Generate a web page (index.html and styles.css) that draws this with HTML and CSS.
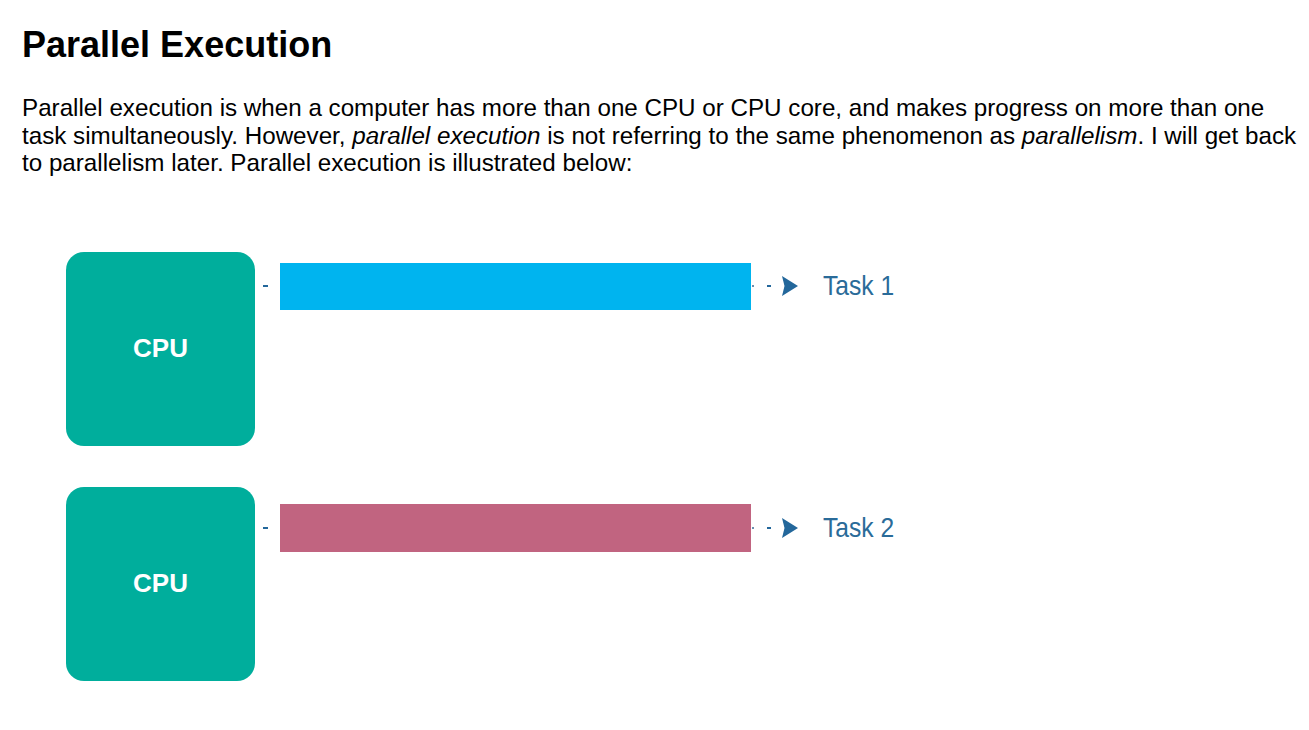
FILE: index.html
```html
<!DOCTYPE html>
<html lang="en">
<head>
<meta charset="utf-8">
<title>Parallel Execution</title>
<link rel="stylesheet" href="styles.css">
</head>
<body>
<main class="page">
  <h1 class="title">Parallel Execution</h1>
  <p class="text">Parallel execution is when a computer has more than one CPU or CPU core, and makes progress on more than one<br>task simultaneously. However, <em>parallel execution</em> is not referring to the same phenomenon as <em>parallelism</em>. I will get back<br>to parallelism later. Parallel execution is illustrated below:</p>
  <div class="diagram">
    <div class="row row-1">
      <div class="cpu">CPU</div>
      <div class="lane">
        <span class="dash dash-in"></span>
        <div class="bar bar-blue"></div>
        <span class="dot"></span>
        <span class="dash dash-out"></span>
        <svg class="arrow" width="16" height="20" viewBox="0 0 16 20"><polygon points="0,0 16,10 0,20 2.5,10" fill="#23679b"/></svg>
        <span class="task">Task 1</span>
      </div>
    </div>
    <div class="row row-2">
      <div class="cpu">CPU</div>
      <div class="lane">
        <span class="dash dash-in"></span>
        <div class="bar bar-pink"></div>
        <span class="dot"></span>
        <span class="dash dash-out"></span>
        <svg class="arrow" width="16" height="20" viewBox="0 0 16 20"><polygon points="0,0 16,10 0,20 2.5,10" fill="#23679b"/></svg>
        <span class="task">Task 2</span>
      </div>
    </div>
  </div>
</main>
</body>
</html>
```

FILE: styles.css
```css
html, body {
  margin: 0;
  padding: 0;
  background: #ffffff;
}

.page {
  padding: 24px 0 0 22px;
  font-family: "Liberation Sans", Arial, sans-serif;
  color: #000000;
}

.title {
  margin: 0;
  font-size: 36px;
  font-weight: bold;
  line-height: 41px;
}

.text {
  margin: 29px 0 0 0;
  font-size: 24.2px;
  line-height: 27.6px;
  white-space: nowrap;
}

.diagram {
  margin-top: 75px;
  padding-left: 44px;
  display: flex;
  flex-direction: column;
  gap: 41px;
}

.row {
  display: flex;
  align-items: flex-start;
}

.cpu {
  width: 189px;
  height: 194px;
  border-radius: 18px;
  background: #00ae9c;
  color: #ffffff;
  font-weight: bold;
  font-size: 26px;
  display: flex;
  align-items: center;
  justify-content: center;
  flex: none;
}

.lane {
  display: flex;
  align-items: center;
  margin-top: 11px;
}

.row-2 .lane {
  margin-top: 17px;
}

.dash {
  display: block;
  height: 2px;
  background: #23679b;
  flex: none;
}

.dash-in {
  width: 5px;
  margin-left: 8px;
}

.dash-out {
  width: 4px;
  margin-left: 13px;
}

.dot {
  display: block;
  width: 2px;
  height: 2px;
  background: #6a8fb0;
  margin-left: 1px;
}

.bar {
  width: 471px;
  height: 47px;
  margin-left: 12px;
  flex: none;
}

.bar-blue {
  background: #00b4ef;
}

.bar-pink {
  background: #c16480;
  height: 48px;
}

.arrow {
  display: block;
  margin-left: 11px;
  flex: none;
}

.task {
  margin-left: 25px;
  font-size: 28px;
  color: #2a6b99;
  display: inline-block;
  transform: scaleX(0.88);
  transform-origin: left center;
  line-height: 1;
}
```
